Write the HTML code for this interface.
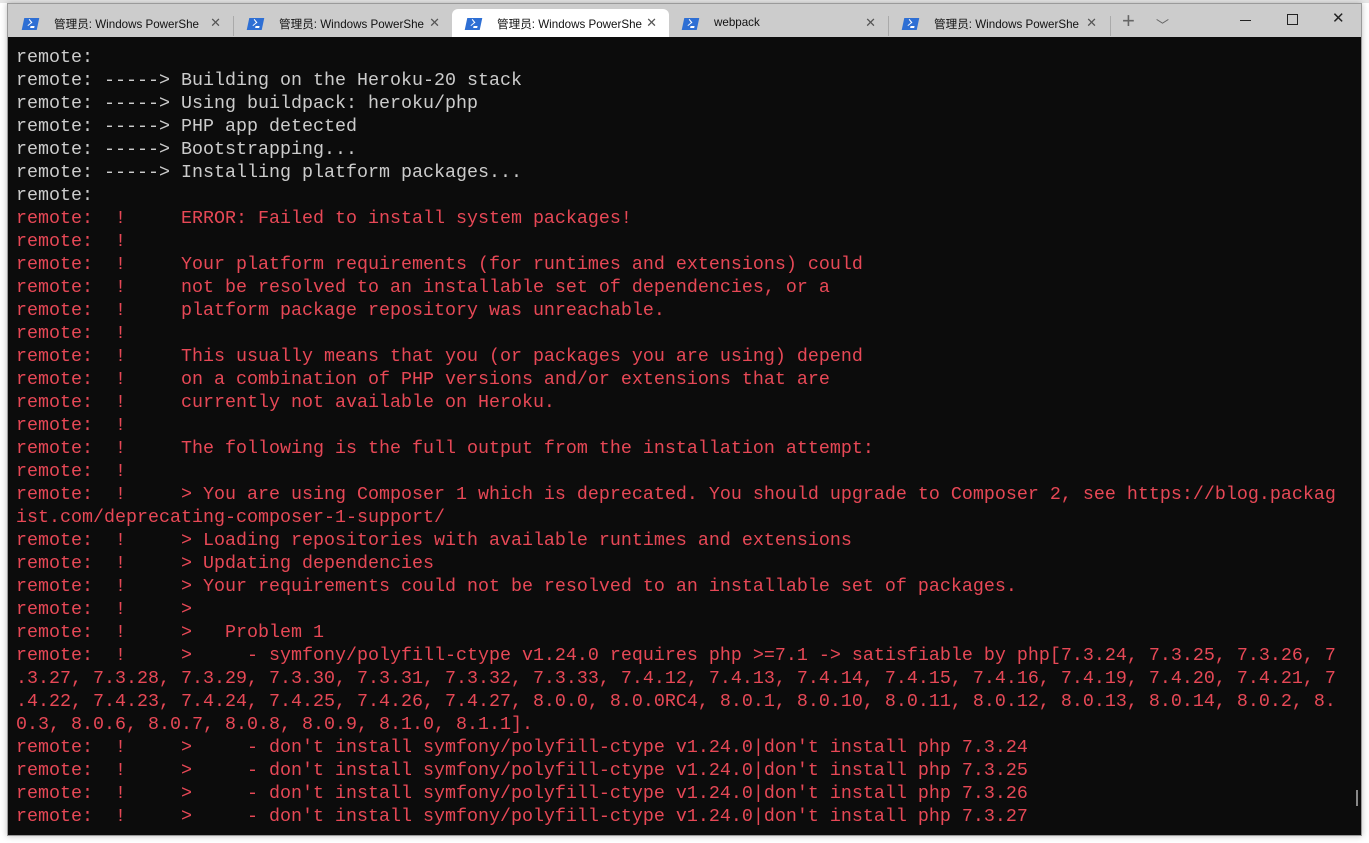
<!DOCTYPE html>
<html><head><meta charset="utf-8"><style>
*{margin:0;padding:0;box-sizing:border-box}
body{width:1369px;height:843px;background:#fff;position:relative;overflow:hidden;font-family:"Segoe UI","Liberation Sans","Noto Sans CJK SC",sans-serif}
.top{position:absolute;left:0;top:0;width:1369px;height:3px;background:#e6e6e6}
.win{position:absolute;left:7px;top:3px;width:1355px;height:833px;background:#cccccc;border:1px solid #9a9a9a;box-shadow:0 0 6px rgba(0,0,0,.25)}
.tab{position:absolute;top:6px;height:28px;font-size:11.6px;color:#111}
.tab.act{background:#fff;top:5px;height:30px;border-radius:6px 6px 0 0}
.ic{position:absolute;left:14px;top:8px;width:15px;height:12px;background:#2e6fd4;transform:skewX(-12deg)}
.act .ic{top:9px}
.ic:after{content:"";position:absolute;left:3px;top:2px;width:4px;height:4px;border-right:1.5px solid #fff;border-bottom:1.5px solid #fff;transform:rotate(-45deg)}
.ic:before{content:"";position:absolute;left:8px;top:8px;width:4px;height:1.5px;background:#fff}
.lbl{position:absolute;left:45px;top:6px;white-space:nowrap}
.act .lbl{top:7px}
.x{position:absolute;right:12px;top:5px;font-size:13px;color:#555}
.sep{position:absolute;top:12px;width:1px;height:20px;background:#aaa}
.term{position:absolute;left:8px;top:37px;width:1353px;height:798px;background:#0c0c0c}
pre{position:absolute;left:8px;top:9px;font-family:"Liberation Mono",monospace;font-size:18.33px;line-height:23px;color:#cccccc}
.r{color:#e74856}
.ctl{position:absolute;top:6px;font-size:18px;color:#222}
</style></head><body>
<div class="top"></div>
<div class="win">
<div class="tab" style="left:1px;width:224px"><div class="ic"></div><span class="lbl">管理员: Windows PowerShe</span><span class="x">✕</span></div>
<div class="sep" style="left:225px"></div>
<div class="tab" style="left:226px;width:218px"><div class="ic"></div><span class="lbl">管理员: Windows PowerShe</span><span class="x">✕</span></div>
<div class="tab act" style="left:444px;width:217px"><div class="ic"></div><span class="lbl">管理员: Windows PowerShe</span><span class="x" style="top:6px">✕</span></div>
<div class="tab" style="left:661px;width:219px"><div class="ic"></div><span class="lbl">webpack</span><span class="x">✕</span></div>
<div class="sep" style="left:880px"></div>
<div class="tab" style="left:881px;width:220px"><div class="ic"></div><span class="lbl">管理员: Windows PowerShe</span><span class="x">✕</span></div>
<div class="sep" style="left:1102px"></div>
<div class="ctl" style="left:1114px;font-size:22px;top:4px;color:#666">+</div>
<div class="ctl" style="left:1148px;font-size:13px;top:11px;color:#666">﹀</div>
<div style="position:absolute;left:1232px;top:16px;width:11px;height:1px;background:#222"></div>
<div style="position:absolute;left:1279px;top:10px;width:11px;height:11px;border:1px solid #222"></div>
<div class="ctl" style="left:1324px;top:5px;font-size:15px">✕</div>
</div>
<div class="term"><pre>remote:
remote: -----&gt; Building on the Heroku-20 stack
remote: -----&gt; Using buildpack: heroku/php
remote: -----&gt; PHP app detected
remote: -----&gt; Bootstrapping...
remote: -----&gt; Installing platform packages...
remote:
<span class="r">remote:  !     ERROR: Failed to install system packages!
remote:  !
remote:  !     Your platform requirements (for runtimes and extensions) could
remote:  !     not be resolved to an installable set of dependencies, or a
remote:  !     platform package repository was unreachable.
remote:  !
remote:  !     This usually means that you (or packages you are using) depend
remote:  !     on a combination of PHP versions and/or extensions that are
remote:  !     currently not available on Heroku.
remote:  !
remote:  !     The following is the full output from the installation attempt:
remote:  !
remote:  !     &gt; You are using Composer 1 which is deprecated. You should upgrade to Composer 2, see https://blog.packag
ist.com/deprecating-composer-1-support/
remote:  !     &gt; Loading repositories with available runtimes and extensions
remote:  !     &gt; Updating dependencies
remote:  !     &gt; Your requirements could not be resolved to an installable set of packages.
remote:  !     &gt;
remote:  !     &gt;   Problem 1
remote:  !     &gt;     - symfony/polyfill-ctype v1.24.0 requires php &gt;=7.1 -&gt; satisfiable by php[7.3.24, 7.3.25, 7.3.26, 7
.3.27, 7.3.28, 7.3.29, 7.3.30, 7.3.31, 7.3.32, 7.3.33, 7.4.12, 7.4.13, 7.4.14, 7.4.15, 7.4.16, 7.4.19, 7.4.20, 7.4.21, 7
.4.22, 7.4.23, 7.4.24, 7.4.25, 7.4.26, 7.4.27, 8.0.0, 8.0.0RC4, 8.0.1, 8.0.10, 8.0.11, 8.0.12, 8.0.13, 8.0.14, 8.0.2, 8.
0.3, 8.0.6, 8.0.7, 8.0.8, 8.0.9, 8.1.0, 8.1.1].
remote:  !     &gt;     - don't install symfony/polyfill-ctype v1.24.0|don't install php 7.3.24
remote:  !     &gt;     - don't install symfony/polyfill-ctype v1.24.0|don't install php 7.3.25
remote:  !     &gt;     - don't install symfony/polyfill-ctype v1.24.0|don't install php 7.3.26
remote:  !     &gt;     - don't install symfony/polyfill-ctype v1.24.0|don't install php 7.3.27</span></pre>
<div style="position:absolute;left:1348px;top:753px;width:2px;height:16px;background:#888"></div>
</div>
</body></html>
